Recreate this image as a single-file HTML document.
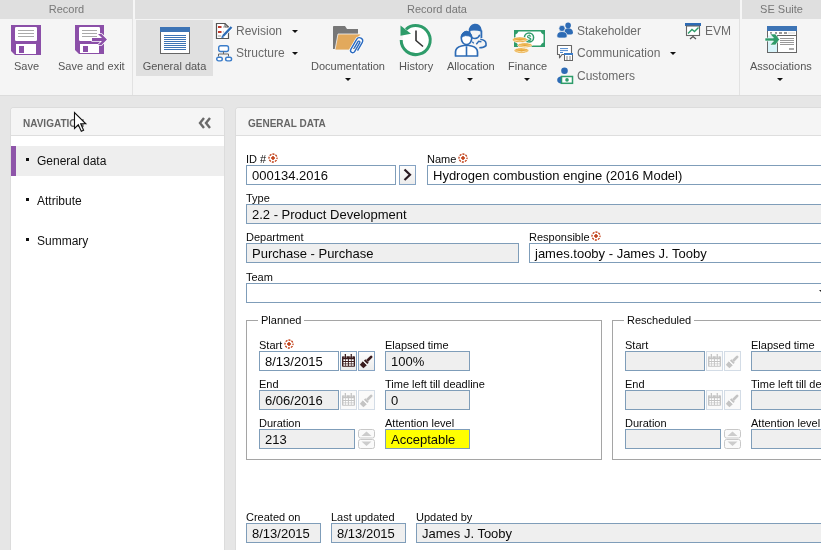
<!DOCTYPE html>
<html><head><meta charset="utf-8">
<style>
*{box-sizing:border-box;margin:0;padding:0}
html,body{width:821px;height:550px;overflow:hidden}
body{font-family:"Liberation Sans",sans-serif;background:#e6e6e6;position:relative}
#wrap{position:absolute;left:0;top:0;width:821px;height:550px;will-change:transform}
.abs{position:absolute}
#hdr{left:0;top:0;width:821px;height:19px;background:#dfdfdf}
.hl{position:absolute;top:0;height:19px;font-size:11px;color:#777;text-align:center;line-height:18px}
#ribbon{left:0;top:19px;width:821px;height:77px;background:#f5f5f5;border-bottom:1px solid #dcdcdc}
.sep{position:absolute;width:1px;background:#e2e2e2}
.big{position:absolute;font-size:11px;color:#555;text-align:center;white-space:nowrap}
.sm{position:absolute;font-size:12px;color:#6a6a6a;white-space:nowrap}
.arr{position:absolute;width:0;height:0;border-left:3px solid transparent;border-right:3px solid transparent;border-top:3px solid #111}
.panel{position:absolute;background:#fff;top:108px;height:450px;border-radius:3px;overflow:hidden;box-shadow:0 0 0 1px #dcdcdc}
.ph{position:absolute;left:0;top:0;right:0;height:28px;background:#f5f5f5;border-bottom:1px solid #dedede}
.pt{position:absolute;top:10px;font-size:10px;font-weight:bold;color:#666}
.nav{position:absolute;left:0;width:213px;height:30px}
.nav .b{position:absolute;left:15px;top:12px;width:3px;height:3px;background:#111}
.nav .t{position:absolute;left:26px;top:8px;font-size:12px;color:#111}
.lbl{position:absolute;font-size:11px;color:#0a0a0a;white-space:nowrap;line-height:13px}
.inp{position:absolute;height:20px;border:1px solid #7f9db9;background:#fff;font-size:13px;color:#0a0a0a;padding-left:5px;padding-top:1px;line-height:17px;white-space:nowrap;overflow:hidden}
.dis{background:#efefef}
.req{display:inline-block;vertical-align:top;margin-left:2px}
fieldset{position:absolute;border:1px solid #a5a5a5}
.leg{position:absolute;font-size:11px;color:#0a0a0a;background:#fff;padding:0 3px;line-height:13px}
.btn{position:absolute;width:17px;height:20px;border:1px solid #85a3c3;background:linear-gradient(#fdfdfd,#ececec)}
.bd{border-color:#d3dce6;background:#fafafa}
</style></head><body><div id="wrap">
<div id="hdr" class="abs">
  <div class="hl" style="left:0;width:133px">Record</div>
  <div class="abs" style="left:133px;top:0;width:2px;height:19px;background:#f6f6f6"></div>
  <div class="hl" style="left:135px;width:604px">Record data</div>
  <div class="abs" style="left:740px;top:0;width:2px;height:19px;background:#f6f6f6"></div>
  <div class="hl" style="left:742px;width:79px">SE Suite</div>
</div>
<div id="ribbon" class="abs">
  <div class="sep" style="left:132px;top:0;height:76px"></div>
  <div class="sep" style="left:739px;top:0;height:76px"></div>
  <div class="abs" style="left:136px;top:1px;width:77px;height:56px;background:#e0e0e0"></div>
  <div class="big" style="left:0;width:53px;top:41px">Save</div>
  <div class="big" style="left:58px;top:41px">Save and exit</div>
  <div class="big" style="left:136px;width:77px;top:41px">General data</div>
  <div class="sm" style="left:236px;top:5px">Revision</div>
  <div class="arr" style="left:292px;top:11px"></div>
  <div class="sm" style="left:236px;top:27px">Structure</div>
  <div class="arr" style="left:292px;top:33px"></div>
  <div class="big" style="left:311px;top:41px">Documentation</div>
  <div class="arr" style="left:345px;top:59px"></div>
  <div class="big" style="left:399px;top:41px">History</div>
  <div class="big" style="left:447px;top:41px">Allocation</div>
  <div class="arr" style="left:467px;top:59px"></div>
  <div class="big" style="left:508px;top:41px">Finance</div>
  <div class="arr" style="left:524px;top:59px"></div>
  <div class="sm" style="left:577px;top:5px">Stakeholder</div>
  <div class="sm" style="left:577px;top:27px">Communication</div>
  <div class="arr" style="left:670px;top:33px"></div>
  <div class="sm" style="left:577px;top:50px">Customers</div>
  <div class="sm" style="left:705px;top:5px">EVM</div>
  <div class="big" style="left:750px;top:41px">Associations</div>
  <div class="arr" style="left:777px;top:59px"></div>
</div>

<!-- NAV panel -->
<div class="panel" style="left:11px;width:213px">
  <div class="ph"><div class="pt" style="left:12px">NAVIGATION</div></div>
  <div class="nav" style="top:38px;background:#eeeeee"><div class="abs" style="left:0;top:0;width:5px;height:30px;background:#8e55a9"></div><div class="b"></div><div class="t">General data</div></div>
  <div class="nav" style="top:78px"><div class="b"></div><div class="t">Attribute</div></div>
  <div class="nav" style="top:118px"><div class="b"></div><div class="t">Summary</div></div>
</div>

<!-- MAIN panel -->
<div class="panel" style="left:236px;width:600px">
  <div class="ph"><div class="pt" style="left:12px">GENERAL DATA</div></div>
</div>

<div id="form">
  <div class="lbl" style="left:246px;top:153px">ID #</div>
  <div class="inp" style="left:246px;top:165px;width:150px">000134.2016</div>
  <div class="btn" style="left:399px;top:165px"></div>
  <div class="lbl" style="left:427px;top:153px">Name</div>
  <div class="inp" style="left:427px;top:165px;width:400px">Hydrogen combustion engine (2016 Model)</div>
  <div class="lbl" style="left:246px;top:192px">Type</div>
  <div class="inp dis" style="left:246px;top:204px;width:580px">2.2 - Product Development</div>
  <div class="lbl" style="left:246px;top:231px">Department</div>
  <div class="inp dis" style="left:246px;top:243px;width:273px">Purchase - Purchase</div>
  <div class="lbl" style="left:529px;top:231px">Responsible</div>
  <div class="inp" style="left:529px;top:243px;width:300px">james.tooby - James J. Tooby</div>
  <div class="lbl" style="left:246px;top:271px">Team</div>
  <div class="inp" style="left:246px;top:283px;width:580px"></div>
  <div class="arr" style="left:819px;top:290px;border-top-color:#222"></div>

  <div class="abs" style="left:246px;top:320px;width:356px;height:140px;border:1px solid #a5a5a5"></div>
  <div class="leg" style="left:258px;top:314px">Planned</div>
  <div class="lbl" style="left:259px;top:339px">Start</div>
  <div class="inp" style="left:259px;top:351px;width:80px">8/13/2015</div>
  <div class="btn" style="left:340px;top:351px"></div>
  <div class="btn" style="left:358px;top:351px"></div>
  <div class="lbl" style="left:385px;top:339px">Elapsed time</div>
  <div class="inp dis" style="left:385px;top:351px;width:85px">100%</div>
  <div class="lbl" style="left:259px;top:378px">End</div>
  <div class="inp dis" style="left:259px;top:390px;width:80px">6/06/2016</div>
  <div class="btn bd" style="left:340px;top:390px"></div>
  <div class="btn bd" style="left:358px;top:390px"></div>
  <div class="lbl" style="left:385px;top:378px">Time left till deadline</div>
  <div class="inp dis" style="left:385px;top:390px;width:85px">0</div>
  <div class="lbl" style="left:259px;top:417px">Duration</div>
  <div class="inp dis" style="left:259px;top:429px;width:96px">213</div>
    <div class="lbl" style="left:385px;top:417px">Attention level</div>
  <div class="inp" style="left:385px;top:429px;width:85px;background:#ffff00">Acceptable</div>

  <div class="abs" style="left:612px;top:320px;width:356px;height:140px;border:1px solid #a5a5a5"></div>
  <div class="leg" style="left:624px;top:314px">Rescheduled</div>
  <div class="lbl" style="left:625px;top:339px">Start</div>
  <div class="inp dis" style="left:625px;top:351px;width:80px"></div>
  <div class="btn bd" style="left:706px;top:351px"></div>
  <div class="btn bd" style="left:724px;top:351px"></div>
  <div class="lbl" style="left:751px;top:339px">Elapsed time</div>
  <div class="inp dis" style="left:751px;top:351px;width:85px"></div>
  <div class="lbl" style="left:625px;top:378px">End</div>
  <div class="inp dis" style="left:625px;top:390px;width:80px"></div>
  <div class="btn bd" style="left:706px;top:390px"></div>
  <div class="btn bd" style="left:724px;top:390px"></div>
  <div class="lbl" style="left:751px;top:378px">Time left till deadline</div>
  <div class="inp dis" style="left:751px;top:390px;width:85px"></div>
  <div class="lbl" style="left:625px;top:417px">Duration</div>
  <div class="inp dis" style="left:625px;top:429px;width:96px"></div>
    <div class="lbl" style="left:751px;top:417px">Attention level</div>
  <div class="inp dis" style="left:751px;top:429px;width:85px"></div>

  <div class="lbl" style="left:246px;top:511px">Created on</div>
  <div class="inp dis" style="left:246px;top:523px;width:75px">8/13/2015</div>
  <div class="lbl" style="left:331px;top:511px">Last updated</div>
  <div class="inp dis" style="left:331px;top:523px;width:75px">8/13/2015</div>
  <div class="lbl" style="left:416px;top:511px">Updated by</div>
  <div class="inp dis" style="left:416px;top:523px;width:420px">James J. Tooby</div>
</div>

<!-- ICONS -->
<svg class="abs" style="left:11px;top:25px" width="30" height="30" viewBox="0 0 30 30">
 <path d="M0,0H30V30H4L0,26Z" fill="#8b4fa8"/>
 <rect x="4" y="2" width="22" height="14" rx="1.2" fill="#fff"/>
 <path d="M7,5.5H23M7,8.5H23M7,11.5H23" stroke="#aaa" stroke-width="1"/>
 <rect x="5" y="19" width="20" height="10" fill="#fff"/>
 <rect x="8" y="21" width="5" height="7" fill="#8b4fa8"/>
</svg>
<svg class="abs" style="left:75px;top:25px" width="34" height="30" viewBox="0 0 34 30">
 <path d="M0,0H29V29H4L0,25Z" fill="#8b4fa8"/>
 <rect x="4" y="2" width="21" height="14" rx="1.2" fill="#fff"/>
 <path d="M7,5.5H22M7,8.5H22M7,11.5H22" stroke="#aaa" stroke-width="1"/>
 <rect x="5" y="19" width="19" height="9" fill="#fff"/>
 <rect x="8" y="21" width="5" height="6" fill="#8b4fa8"/>
 <path d="M17,13H27L23,9H26.5L32,14.5L26.5,20H23L27,16H17Z" fill="#fff" stroke="#fff" stroke-width="1.6" stroke-linejoin="round"/><path d="M17,13H27L23,9H26.5L32,14.5L26.5,20H23L27,16H17Z" fill="#8b4fa8"/>
</svg>
<svg class="abs" style="left:160px;top:27px" width="30" height="28" viewBox="0 0 30 28">
 <rect x="0.5" y="0.5" width="29" height="26" fill="#fff" stroke="#666" stroke-width="1"/>
 <rect x="0" y="0" width="30" height="5" fill="#3d74b5"/>
 <path d="M4,8.5H26M4,10.5H26M4,12.5H26M4,14.5H26M4,16.5H26M4,18.5H26M4,20.5H26M4,22.5H26" stroke="#3d74b5" stroke-width="1"/>
</svg>
<svg class="abs" style="left:215px;top:22px" width="18" height="18" viewBox="0 0 18 18">
 <path d="M1.5,1.5H10L13.5,5V16.5H1.5Z" fill="#fff" stroke="#555" stroke-width="1.2"/>
 <path d="M10,1.5V5H13.5" fill="none" stroke="#555" stroke-width="1"/>
 <rect x="3" y="4" width="3.5" height="2" fill="#c0392b"/>
 <rect x="3" y="9" width="3.5" height="2" fill="#c0392b"/>
 <path d="M8,5H10M8,10H9M3,14H6" stroke="#999" stroke-width="1"/>
 <path d="M8,14L16.5,5" stroke="#fff" stroke-width="4"/><path d="M8,14L16.5,5" stroke="#2d6bb5" stroke-width="2.4"/>
 <path d="M6.3,16.2L7,13.2L9.2,15.2Z" fill="#2d6bb5"/>
</svg>
<svg class="abs" style="left:215px;top:44px" width="18" height="18" viewBox="0 0 18 18">
 <rect x="3.7" y="1.7" width="9.8" height="5.8" rx="2" fill="#fff" stroke="#3a7cc9" stroke-width="1.4"/>
 <path d="M8.5,7.5V10M3.5,10H13.5V12.5M3.5,10V12.5" fill="none" stroke="#666" stroke-width="1"/>
 <rect x="1.7" y="13.3" width="5.6" height="3.6" rx="1.8" fill="#fff" stroke="#3a7cc9" stroke-width="1.4"/>
 <rect x="10.6" y="13.3" width="6" height="3.6" rx="1.8" fill="#fff" stroke="#3a7cc9" stroke-width="1.4"/>
</svg>
<svg class="abs" style="left:333px;top:25px" width="32" height="32" viewBox="0 0 32 32">
 <path d="M0,1.5Q0,1 1,1H12L14,4H25V24H0Z" fill="#777"/>
 <path d="M5,9H28L17,25H2Z" fill="#e2a95c" stroke="#f5f5f5" stroke-width="0.8"/>
 <g transform="translate(23.5,21) rotate(30)">
  <path d="M-0.9,3V-4.5A1.05,1.05 0 0 1 1.2,-4.5V5.8A2.2,2.2 0 0 1 -3.2,5.8V-5.8A3.2,3.2 0 0 1 3.2,-5.8V3.5" fill="none" stroke="#fff" stroke-width="3"/>
  <path d="M-0.9,3V-4.5A1.05,1.05 0 0 1 1.2,-4.5V5.8A2.2,2.2 0 0 1 -3.2,5.8V-5.8A3.2,3.2 0 0 1 3.2,-5.8V3.5" fill="none" stroke="#2a6abf" stroke-width="1.4"/>
 </g>
</svg>
<svg class="abs" style="left:398px;top:22px" width="36" height="36" viewBox="0 0 36 36">
 <circle cx="18" cy="18" r="13.5" fill="#fff"/><path d="M3.2,18A14.5,14.5 0 1 0 8,7.3" fill="none" stroke="#2e9c6a" stroke-width="3"/>
 <path d="M2.5,3.5V13.8L13,11.8Z" fill="#2e9c6a"/>
 <path d="M18,8.5V18.5L25,24.5" fill="none" stroke="#333" stroke-width="1.6"/>
</svg>
<svg class="abs" style="left:453px;top:22px" width="36" height="36" viewBox="0 0 36 36">
 <path d="M15.8,9.2A6.3,6.6 0 0 1 28.6,7.6L28.9,9.8Q22,7.8 15.8,9.2Z" fill="#2d6bb5"/>
 <path d="M28.4,8.5V16" stroke="#2d6bb5" stroke-width="1.8"/>
 <path d="M16.6,9Q16.6,16.6 22,16.6Q25.5,16.3 26.8,12.8" fill="none" stroke="#2d6bb5" stroke-width="1.5"/>
 <path d="M27.3,17.2Q33,18 33,21.5V23.6Q31,25.8 26.3,25.8" fill="none" stroke="#2d6bb5" stroke-width="1.6"/>
 <path d="M23.3,22.2L25.7,19.3L28.4,19.8" fill="none" stroke="#2d6bb5" stroke-width="1.4"/>
 <path d="M19.3,19.8L20.8,21.4" stroke="#2d6bb5" stroke-width="1.3"/>
 <path d="M2.5,34V30Q2.5,25.5 8.5,24L13.5,23L18.5,24Q24.5,25.5 24.5,30V34Z" fill="#fff" stroke="#2d6bb5" stroke-width="1.7" stroke-linejoin="round"/>
 <path d="M13.5,25V34" stroke="#2d6bb5" stroke-width="1.6"/>
 <path d="M12.3,24.3H14.7L13.5,26Z" fill="#2d6bb5"/>
 <ellipse cx="13.5" cy="16.3" rx="5.2" ry="6.3" fill="#fff" stroke="#2d6bb5" stroke-width="1.6"/>
 <path d="M8.3,15.5A5.2,6.3 0 0 1 18.7,15.5Q16.5,13.2 12.5,13.6Q10,14 8.3,15.5Z" fill="#2d6bb5" stroke="#2d6bb5" stroke-width="1"/>
</svg>
<svg class="abs" style="left:510px;top:27px" width="36" height="30" viewBox="0 0 36 30">
 <rect x="4.75" y="3.75" width="29.5" height="15.5" fill="#fff" stroke="#2e9c6a" stroke-width="1.5"/>
 <path d="M4,3H8.5A4,4 0 0 1 4,7.5ZM35,3H30.5A4,4 0 0 0 35,7.5ZM4,20H8.5A4,4 0 0 0 4,15.5ZM35,20H30.5A4,4 0 0 1 35,15.5Z" fill="#2e9c6a"/>
 <circle cx="19" cy="10.5" r="4.6" fill="#fff" stroke="#2e9c6a" stroke-width="1.5"/>
 <text x="19" y="13.6" font-size="8.5" font-weight="bold" fill="#2e9c6a" text-anchor="middle" font-family="Liberation Sans">$</text>
 <ellipse cx="11.45" cy="23.55" rx="7.35" ry="2.75" fill="#e6a63a" stroke="#fff" stroke-width="0.7"/><path d="M5.3,23.75Q11.45,26.025000000000002 17.599999999999998,23.75" fill="none" stroke="#fbe2b0" stroke-width="0.9"/><path d="M6.1,22.95Q11.45,21.625 16.799999999999997,22.95" fill="none" stroke="#f2bd5c" stroke-width="0.8"/>
 <ellipse cx="14.85" cy="18.35" rx="7.3" ry="2.5" fill="#e6a63a" stroke="#fff" stroke-width="0.7"/><path d="M8.75,18.55Q14.85,20.6 20.95,18.55" fill="none" stroke="#fbe2b0" stroke-width="0.9"/><path d="M9.55,17.75Q14.85,16.6 20.15,17.75" fill="none" stroke="#f2bd5c" stroke-width="0.8"/>
 <ellipse cx="9.85" cy="12.75" rx="7.6" ry="2.85" fill="#e6a63a" stroke="#fff" stroke-width="0.7"/><path d="M3.45,12.95Q9.85,15.315 16.25,12.95" fill="none" stroke="#fbe2b0" stroke-width="0.9"/><path d="M4.25,12.15Q9.85,10.755 15.45,12.15" fill="none" stroke="#f2bd5c" stroke-width="0.8"/>
</svg>
<svg class="abs" style="left:556px;top:22px" width="18" height="18" viewBox="0 0 18 18">
 <circle cx="12.1" cy="3.4" r="2.8" fill="#2d6bb5"/>
 <path d="M8.5,8.5Q9,6.3 12,6.3Q16.5,6.3 17,10.5Q17,12.5 15,12.5H9Z" fill="#2d6bb5"/>
 <circle cx="6" cy="6.4" r="3.1" fill="#2d6bb5" stroke="#f5f5f5" stroke-width="0.7"/>
 <path d="M0.8,14Q1,9.5 6,9.5Q11,9.5 11.2,14Q11.2,16 9,16H3Q0.8,16 0.8,14Z" fill="#2d6bb5" stroke="#f5f5f5" stroke-width="0.7"/>
</svg>
<svg class="abs" style="left:556px;top:44px" width="18" height="18" viewBox="0 0 18 18">
 <path d="M1.5,1.5H15.5V10.5H6L3.5,13.8V10.5H1.5Z" fill="#fff" stroke="#666" stroke-width="1.1" stroke-linejoin="round"/>
 <path d="M4,4.6H12M4,6.6H12M4,8.5H7" stroke="#3a7cc9" stroke-width="0.9"/>
 <rect x="8.5" y="9.5" width="8" height="7" fill="#fff" stroke="#666" stroke-width="1"/>
 <rect x="8" y="9" width="9" height="2" fill="#3a7cc9"/>
 <path d="M10,13H12M13,13H15M10,15H12M13,15H15" stroke="#777" stroke-width="0.9"/>
</svg>
<svg class="abs" style="left:556px;top:66px" width="18" height="20" viewBox="0 0 18 20">
 <circle cx="8.5" cy="4.8" r="3.3" fill="#2d6bb5"/>
 <path d="M5.5,10.3Q1.2,10.8 1.2,14Q1.2,17.2 5.5,17.8Z" fill="#2d6bb5"/>
 <rect x="5.5" y="10.5" width="11" height="6.8" fill="#fff" stroke="#2e9c6a" stroke-width="1.5"/>
 <circle cx="11" cy="13.9" r="1.8" fill="#2e9c6a"/>
</svg>
<svg class="abs" style="left:684px;top:22px" width="18" height="18" viewBox="0 0 18 18">
 <rect x="1" y="1" width="16" height="3" fill="#2d6bb5"/>
 <rect x="2.5" y="4" width="13" height="9.5" fill="#fff" stroke="#666" stroke-width="1.1"/>
 <path d="M4,11.5L8,7.5L10.5,9.5L14.5,5.5" fill="none" stroke="#2e9c6a" stroke-width="1.4"/>
 <path d="M9,13.5V15M6,17L9,14.5L12,17" fill="none" stroke="#555" stroke-width="1.3"/>
</svg>
<svg class="abs" style="left:764px;top:25px" width="36" height="30" viewBox="0 0 36 30">
 <rect x="3.5" y="1.5" width="29" height="26" fill="#fff" stroke="#666" stroke-width="1"/>
 <rect x="4" y="10.5" width="9" height="16.5" fill="#d8f4fa"/>
 <rect x="3" y="1" width="30" height="5" fill="#3d74b5"/>
 <path d="M6,8H8M11,8H13M15,8H18M20,8H23" stroke="#777" stroke-width="1.6"/>
 <path d="M24,8H31" stroke="#e2e2e2" stroke-width="1.6"/>
 <path d="M13,10.5H32M13.5,10.5V27" stroke="#666" stroke-width="1"/>
 <path d="M16,13.5H30M16,15.5H30M16,17.5H30M16,19.5H30" stroke="#999" stroke-width="1"/>
 <rect x="25" y="23" width="5" height="2" fill="#aaa"/>
 <path d="M1,13H9.5L6,9H11.5L15.5,14.5L11.5,20H6L9.5,16H1Z" fill="#2e9c6a" stroke="#fff" stroke-width="0.6"/>
</svg>
<!-- nav collapse -->
<svg class="abs" style="left:197px;top:115px" width="17" height="16" viewBox="0 0 17 16">
 <path d="M7,3L3,8L7,13M13,3L9,8L13,13" fill="none" stroke="#6a6a6a" stroke-width="2.4"/>
</svg>

<!-- required icons -->
<svg style="display:none"><defs><g id="rq"><circle cx="5" cy="5" r="4" fill="none" stroke="#c03a10" stroke-width="1.3" stroke-dasharray="2.1 1.04" stroke-dashoffset="1.05"/><path d="M5,3V7M3,5H7" stroke="#c03a10" stroke-width="1.5"/></g></defs></svg>
<svg class="abs" style="left:268px;top:153px" width="10" height="10"><use href="#rq"/></svg>
<svg class="abs" style="left:458px;top:153px" width="10" height="10"><use href="#rq"/></svg>
<svg class="abs" style="left:591px;top:231px" width="10" height="10"><use href="#rq"/></svg>
<svg class="abs" style="left:284px;top:339px" width="10" height="10"><use href="#rq"/></svg>
<!-- chevron btn -->
<svg class="abs" style="left:399px;top:165px" width="17" height="20"><path d="M5.5,4.5L11,9.8L5.5,15" fill="none" stroke="#2a1a22" stroke-width="2.2"/></svg>
<!-- calendar icons -->
<svg style="display:none"><defs>
<g id="cal"><rect x="0" y="2.3" width="13" height="10.5" rx="0.8"/><rect x="2.7" y="0" width="1.3" height="3.6"/><rect x="8.6" y="0" width="1.3" height="3.6"/><path d="M2.2,1.3V3.8M4.5,1.3V3.8M8.1,1.3V3.8M10.4,1.3V3.8" stroke="#fff" stroke-width="0.6" opacity="0.8"/></g>
<g id="calw"><path d="M1.4,5.2h1.8v1.7h-1.8zM3.9,5.2h2v1.7h-2zM6.9,5.2h2v1.7h-2zM9.6,5.2h2.1v1.7h-2.1zM1.4,7.9h1.8v1.7h-1.8zM3.9,7.9h2v1.7h-2zM6.9,7.9h2v1.7h-2zM9.6,7.9h2.1v1.7h-2.1zM1.4,10.3h1.8v1.5h-1.8zM3.9,10.3h2v1.5h-2zM6.9,10.3h2v1.5h-2zM9.6,10.3h2.1v1.5h-2.1z" fill="#fff"/></g>
<g id="brush"><g transform="translate(2.6,13.4) rotate(-45)"><path d="M0,-2.5L4.6,-2.8V2.8L0,2.5Z"/><rect x="4.6" y="-2.4" width="1.1" height="4.8" fill="#fff"/><rect x="5.7" y="-2.4" width="2" height="4.8"/><path d="M7.7,-1.35H13.5A1.35,1.35 0 0 1 13.5,1.35H7.7Z"/></g></g>
</defs></svg>
<svg class="abs" style="left:342px;top:354px" width="14" height="14" fill="#3a1c1e"><use href="#cal"/><use href="#calw"/></svg>
<svg class="abs" style="left:359px;top:353px" width="16" height="16" fill="#3a1c1e"><use href="#brush"/></svg>
<svg class="abs" style="left:342px;top:393px" width="14" height="14" fill="#c4c4c4"><use href="#cal"/><use href="#calw"/></svg>
<svg class="abs" style="left:359px;top:392px" width="16" height="16" fill="#c4c4c4"><use href="#brush"/></svg>
<svg class="abs" style="left:708px;top:354px" width="14" height="14" fill="#c4c4c4"><use href="#cal"/><use href="#calw"/></svg>
<svg class="abs" style="left:725px;top:353px" width="16" height="16" fill="#c4c4c4"><use href="#brush"/></svg>
<svg class="abs" style="left:708px;top:393px" width="14" height="14" fill="#c4c4c4"><use href="#cal"/><use href="#calw"/></svg>
<svg class="abs" style="left:725px;top:392px" width="16" height="16" fill="#c4c4c4"><use href="#brush"/></svg>
<!-- spinners -->
<svg style="display:none"><defs><g id="spin"><rect x="0.5" y="0.5" width="16" height="8.5" rx="2" fill="#fafafa" stroke="#c8c8c8"/><rect x="0.5" y="10.5" width="16" height="9" rx="2" fill="#fafafa" stroke="#c8c8c8"/><path d="M3.5,7H13.5L8.5,2.5Z" fill="#cccccc"/><path d="M3.5,12.5H13.5L8.5,17Z" fill="#cccccc"/></g></defs></svg>
<svg class="abs" style="left:358px;top:429px" width="17" height="20"><use href="#spin"/></svg>
<svg class="abs" style="left:724px;top:429px" width="17" height="20"><use href="#spin"/></svg>
<!-- cursor -->
<svg class="abs" style="left:73px;top:111px" width="16" height="22" viewBox="0 0 16 22"><path d="M1.5,1.5V17.5L5.3,13.8L8.3,20.3L10.6,19.3L7.7,12.8H12.8Z" fill="#fff" stroke="#111" stroke-width="1.1" stroke-linejoin="miter"/></svg>
</div></body></html>
